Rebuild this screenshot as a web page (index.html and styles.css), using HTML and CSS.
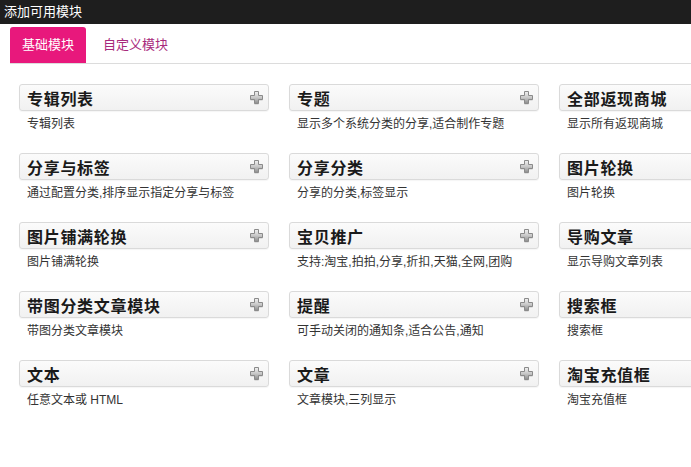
FILE: index.html
```html
<!DOCTYPE html>
<html lang="zh-CN">
<head>
    <meta charset="UTF-8">
    <title>添加可用模块</title>
    <link rel="stylesheet" href="styles.css">
</head>
<body>
    <svg width="0" height="0" class="defs">
        <defs>
            <linearGradient id="plus-fill" x1="0" y1="0" x2="0" y2="1">
                <stop offset="0" stop-color="#f2f2f2"/>
                <stop offset="0.5" stop-color="#c8c8c8"/>
                <stop offset="1" stop-color="#8c8c8c"/>
            </linearGradient>
            <symbol id="plus" viewBox="0 0 13 14">
                <path d="M4.5 1.5h4v4h4v4h-4v4h-4v-4h-4v-4h4z" fill="#6f6f6f" opacity="0.35"/>
                <path d="M4.5 0.5h4v4h4v4h-4v4h-4v-4h-4v-4h4z" fill="url(#plus-fill)" stroke="#8a8a8a"/>
            </symbol>
        </defs>
    </svg>

    <div class="title-bar">添加可用模块</div>

    <div class="tabs">
        <a class="tab active">基础模块</a>
        <a class="tab">自定义模块</a>
    </div>

    <div class="modules">
        <div class="module">
            <div class="module-head"><span>专辑列表</span><svg class="add"><use href="#plus"/></svg></div>
            <div class="module-desc">专辑列表</div>
        </div>
        <div class="module">
            <div class="module-head"><span>专题</span><svg class="add"><use href="#plus"/></svg></div>
            <div class="module-desc">显示多个系统分类的分享,适合制作专题</div>
        </div>
        <div class="module">
            <div class="module-head"><span>全部返现商城</span><svg class="add"><use href="#plus"/></svg></div>
            <div class="module-desc">显示所有返现商城</div>
        </div>

        <div class="module">
            <div class="module-head"><span>分享与标签</span><svg class="add"><use href="#plus"/></svg></div>
            <div class="module-desc">通过配置分类,排序显示指定分享与标签</div>
        </div>
        <div class="module">
            <div class="module-head"><span>分享分类</span><svg class="add"><use href="#plus"/></svg></div>
            <div class="module-desc">分享的分类,标签显示</div>
        </div>
        <div class="module">
            <div class="module-head"><span>图片轮换</span><svg class="add"><use href="#plus"/></svg></div>
            <div class="module-desc">图片轮换</div>
        </div>

        <div class="module">
            <div class="module-head"><span>图片铺满轮换</span><svg class="add"><use href="#plus"/></svg></div>
            <div class="module-desc">图片铺满轮换</div>
        </div>
        <div class="module">
            <div class="module-head"><span>宝贝推广</span><svg class="add"><use href="#plus"/></svg></div>
            <div class="module-desc">支持:淘宝,拍拍,分享,折扣,天猫,全网,团购</div>
        </div>
        <div class="module">
            <div class="module-head"><span>导购文章</span><svg class="add"><use href="#plus"/></svg></div>
            <div class="module-desc">显示导购文章列表</div>
        </div>

        <div class="module">
            <div class="module-head"><span>带图分类文章模块</span><svg class="add"><use href="#plus"/></svg></div>
            <div class="module-desc">带图分类文章模块</div>
        </div>
        <div class="module">
            <div class="module-head"><span>提醒</span><svg class="add"><use href="#plus"/></svg></div>
            <div class="module-desc">可手动关闭的通知条,适合公告,通知</div>
        </div>
        <div class="module">
            <div class="module-head"><span>搜索框</span><svg class="add"><use href="#plus"/></svg></div>
            <div class="module-desc">搜索框</div>
        </div>

        <div class="module">
            <div class="module-head"><span>文本</span><svg class="add"><use href="#plus"/></svg></div>
            <div class="module-desc">任意文本或 HTML</div>
        </div>
        <div class="module">
            <div class="module-head"><span>文章</span><svg class="add"><use href="#plus"/></svg></div>
            <div class="module-desc">文章模块,三列显示</div>
        </div>
        <div class="module">
            <div class="module-head"><span>淘宝充值框</span><svg class="add"><use href="#plus"/></svg></div>
            <div class="module-desc">淘宝充值框</div>
        </div>
    </div>
</body>
</html>
```

FILE: styles.css
```css
html, body {
    overflow: hidden;
}

body {
    margin: 0;
    background: #fff;
    font-family: "Liberation Sans", "Noto Sans CJK SC", sans-serif;
    color: #333;
}

.defs {
    position: absolute;
}

.title-bar {
    height: 24px;
    line-height: 24px;
    padding-left: 4px;
    background: #1e1e1e;
    color: #fff;
    font-size: 13px;
}

.tabs {
    display: flex;
    margin: 3px 0 0 10px;
    border-bottom: 1px solid #dcdcdc;
}

.tab {
    height: 36px;
    line-height: 36px;
    padding: 0 12px;
    margin-right: 5px;
    font-size: 13px;
    color: #a8297c;
    border-radius: 3px 3px 0 0;
    cursor: pointer;
}

.tab.active {
    background: #e8187c;
    color: #fff;
}

/* third column is cut off by the window, like the original */
.modules {
    display: grid;
    grid-template-columns: repeat(3, 250px);
    column-gap: 20px;
    row-gap: 20px;
    padding: 20px 0 0 19px;
    overflow: hidden;
}

.module-head {
    display: flex;
    align-items: center;
    justify-content: space-between;
    height: 25px;
    padding: 0 5px 0 7px;
    border: 1px solid #dadada;
    border-radius: 3px;
    background: linear-gradient(#fbfbfb, #f1f1f1);
    box-shadow: 0 1px 1px rgba(0,0,0,0.04);
}

.module-head span {
    font-size: 16px;
    font-weight: bold;
    letter-spacing: 0.7px;
    color: #1a1a1a;
}

.add {
    width: 13px;
    height: 14px;
    cursor: pointer;
}

.module-desc {
    margin-top: 4px;
    padding-left: 8px;
    font-size: 12px;
    line-height: 18px;
    color: #333;
    white-space: nowrap;
}
```
